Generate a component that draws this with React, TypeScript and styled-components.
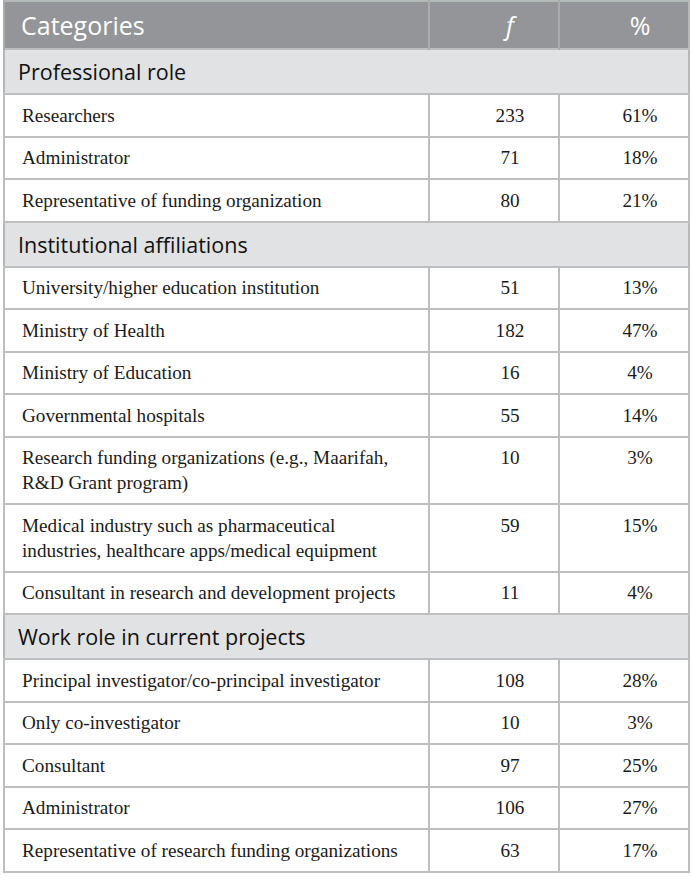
import React from "react";
import styled, { createGlobalStyle } from "styled-components";

const Global = createGlobalStyle`
  html, body { margin: 0; padding: 0; background: #ffffff; }
  body { font-family: "Liberation Serif", serif; }
`;

const Wrap = styled.div`
  padding: 0 4px 0 3px;
`;

const Table = styled.table`
  width: 685px;
  border-collapse: collapse;
  border: 2px solid #b3bab8;
  table-layout: fixed;
`;

const HeadCell = styled.th<{ $align?: string; $italic?: boolean }>`
  background: #939598;
  color: #ffffff;
  font-family: "Open Sans", sans-serif;
  font-weight: 400;
  font-size: 25px;
  font-style: ${(p) => (p.$italic ? "italic" : "normal")};
  text-align: ${(p) => p.$align || "left"};
  height: 48px;
  padding: ${(p) => (p.$align === "center" ? "0 6px 0 38px" : "0 16px")};
  box-sizing: border-box;
  border-left: 2px solid #a9abad;
  vertical-align: middle;
`;

const SectionCell = styled.td`
  background: #e1e2e3;
  color: #111111;
  font-family: "Open Sans", sans-serif;
  font-size: 21.5px;
  height: 45px;
  padding: 0 13px;
  box-sizing: border-box;
  border-top: 2px solid #bcbebf;
  vertical-align: middle;
`;

const Cell = styled.td<{ $center?: boolean }>`
  font-family: "Liberation Serif", serif;
  font-size: 19.2px;
  line-height: 25px;
  color: #1a1a1a;
  padding: ${(p) => (p.$center ? "7.75px 6px 7.75px 38px" : "7.75px 17px")};
  text-align: ${(p) => (p.$center ? "center" : "left")};
  vertical-align: top;
  border: 2px solid #bcbebf;
`;

type Row = [string, string, string];
type Section = { title: string; rows: Row[] };

const data: Section[] = [
  {
    title: "Professional role",
    rows: [
      ["Researchers", "233", "61%"],
      ["Administrator", "71", "18%"],
      ["Representative of funding organization", "80", "21%"],
    ],
  },
  {
    title: "Institutional affiliations",
    rows: [
      ["University/higher education institution", "51", "13%"],
      ["Ministry of Health", "182", "47%"],
      ["Ministry of Education", "16", "4%"],
      ["Governmental hospitals", "55", "14%"],
      ["Research funding organizations (e.g., Maarifah, R&D Grant program)", "10", "3%"],
      ["Medical industry such as pharmaceutical industries, healthcare apps/medical equipment", "59", "15%"],
      ["Consultant in research and development projects", "11", "4%"],
    ],
  },
  {
    title: "Work role in current projects",
    rows: [
      ["Principal investigator/co-principal investigator", "108", "28%"],
      ["Only co-investigator", "10", "3%"],
      ["Consultant", "97", "25%"],
      ["Administrator", "106", "27%"],
      ["Representative of research funding organizations", "63", "17%"],
    ],
  },
];

export default function App() {
  return (
    <Wrap>
      <Global />
      <Table>
        <colgroup>
          <col style={{ width: 425 }} />
          <col style={{ width: 130 }} />
          <col style={{ width: 130 }} />
        </colgroup>
        <thead>
          <tr>
            <HeadCell>Categories</HeadCell>
            <HeadCell $align="center" $italic>f</HeadCell>
            <HeadCell $align="center">%</HeadCell>
          </tr>
        </thead>
        <tbody>
          {data.map((s) => (
            <React.Fragment key={s.title}>
              <tr>
                <SectionCell colSpan={3}>{s.title}</SectionCell>
              </tr>
              {s.rows.map((r, i) => (
                <tr key={i}>
                  <Cell>{r[0]}</Cell>
                  <Cell $center>{r[1]}</Cell>
                  <Cell $center>{r[2]}</Cell>
                </tr>
              ))}
            </React.Fragment>
          ))}
        </tbody>
      </Table>
    </Wrap>
  );
}
